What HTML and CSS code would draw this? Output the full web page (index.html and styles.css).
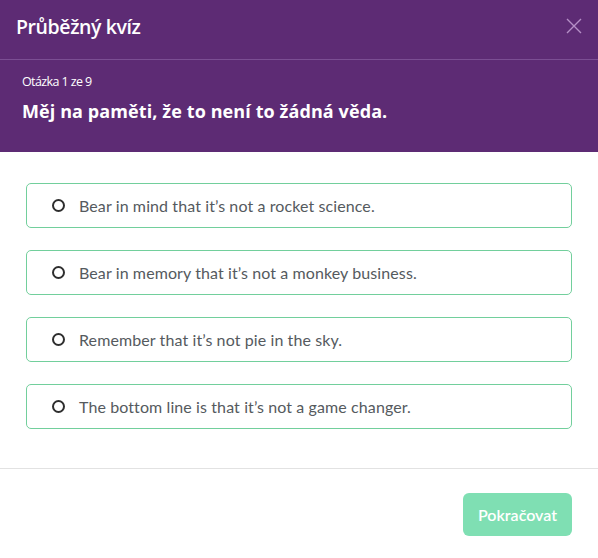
FILE: index.html
```html
<!DOCTYPE html>
<html lang="cs">
<head>
<meta charset="utf-8">
<title>Průběžný kvíz</title>
<link rel="stylesheet" href="styles.css">
</head>
<body>
<div class="modal">
  <div class="head">
    <div class="title-row">
      <h1 class="title">Průběžný kvíz</h1>
      <svg class="close" width="16" height="16" viewBox="0 0 16 16"><path d="M1 1L15 15M15 1L1 15" stroke="#b58fc6" stroke-width="1.4" fill="none"/></svg>
    </div>
    <div class="question">
      <div class="counter">Otázka 1 ze 9</div>
      <div class="q-text">Měj na paměti, že to není to žádná věda.</div>
    </div>
  </div>
  <div class="options">
    <label class="option"><span class="radio"></span><span class="opt-text">Bear in mind that it’s not a rocket science.</span></label>
    <label class="option"><span class="radio"></span><span class="opt-text">Bear in memory that it’s not a monkey business.</span></label>
    <label class="option"><span class="radio"></span><span class="opt-text">Remember that it’s not pie in the sky.</span></label>
    <label class="option"><span class="radio"></span><span class="opt-text">The bottom line is that it’s not a game changer.</span></label>
  </div>
  <div class="foot">
    <button class="btn">Pokračovat</button>
  </div>
</div>
</body>
</html>
```
FILE: styles.css
```css
html, body { margin: 0; padding: 0; background: #fff; }
body { font-family: "Open Sans", "Noto Sans", sans-serif; }
.modal { width: 598px; height: 558px; display: flex; flex-direction: column; }
.head { background: #5d2b74; color: #fff; }
.title-row { height: 59px; display: flex; align-items: center; justify-content: space-between; padding: 0 16px; border-bottom: 1px solid #7b4e93; }
.title { margin: 0; font-size: 19.5px; font-weight: 600; font-family: "Open Sans", sans-serif; letter-spacing: -0.4px; position: relative; top: -3px; }
.close { display: block; position: relative; top: -4px; }
.question { height: 92px; padding: 0 22px; box-sizing: border-box; padding-top: 13px; }
.counter { font-size: 12.5px; font-family: "Open Sans", sans-serif; line-height: 18px; letter-spacing: -0.6px; }
.q-text { font-size: 18px; font-weight: 700; font-family: "Open Sans", sans-serif; line-height: 24px; margin-top: 8px; letter-spacing: 0.1px; }
.options { padding: 31px 26px 0; display: flex; flex-direction: column; gap: 22px; height: 317px; box-sizing: border-box; border-bottom: 1px solid #e2e2e2; }
.option { height: 45px; box-sizing: border-box; border: 1px solid #72cf9c; border-radius: 5px; display: flex; align-items: center; padding-left: 25px; }
.radio { width: 13px; height: 13px; box-sizing: border-box; border: 2px solid #2e2e2e; border-radius: 50%; margin-right: 14px; flex: none; }
.opt-text { font-family: Lato, sans-serif; font-size: 16px; color: #555a5e; letter-spacing: 0.1px; }
.foot { flex: 1; display: flex; justify-content: flex-end; align-items: flex-start; padding: 24px 26px 0; }
.btn { width: 109px; height: 43px; border: 0; border-radius: 6px; background: #7fdfb3; color: #fff; font-family: Lato, sans-serif; font-size: 16px; font-weight: 600; padding: 0; }
```
